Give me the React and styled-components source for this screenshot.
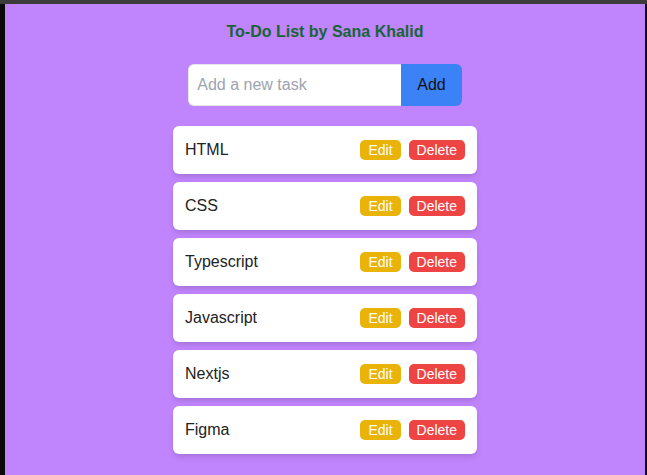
import React, { useState } from "react";
import styled, { createGlobalStyle } from "styled-components";

const GlobalStyle = createGlobalStyle`
  * { box-sizing: border-box; }
  html, body {
    margin: 0;
    padding: 0;
    height: 100%;
  }
  body {
    background: #3b3b3b;
    padding-top: 4px;
    font-family: "Liberation Sans", Arial, sans-serif;
  }
`;

const Screen = styled.div`
  min-height: calc(100vh - 4px);
  background: #c084fc;
  border-left: 5px solid #0a0a0a;
  border-right: 2px solid #0a0a0a;
  padding-top: 16px;
  display: flex;
  flex-direction: column;
  align-items: center;
`;

const Title = styled.h1`
  margin: 0 0 20px;
  font-size: 16px;
  line-height: 24px;
  font-weight: 700;
  color: #166534;
`;

const InputRow = styled.form`
  display: flex;
  margin: 0 0 20px;
`;

const TaskInput = styled.input`
  width: 213px;
  height: 42px;
  padding: 8px;
  font-family: inherit;
  font-size: 16px;
  color: #111;
  border: 1px solid #e5e7eb;
  border-right: none;
  border-radius: 6px 0 0 6px;
  outline: none;
  &::placeholder {
    color: #9ca3af;
  }
`;

const AddButton = styled.button`
  height: 42px;
  padding: 0 16px;
  background: #3b82f6;
  color: #111;
  font-family: inherit;
  font-size: 16px;
  border: none;
  border-radius: 0 6px 6px 0;
  cursor: pointer;
`;

const List = styled.ul`
  list-style: none;
  margin: 0;
  padding: 0;
  width: 304px;
  display: flex;
  flex-direction: column;
  gap: 8px;
`;

const Item = styled.li`
  display: flex;
  align-items: center;
  justify-content: space-between;
  height: 48px;
  padding: 0 12px;
  background: #fff;
  border-radius: 6px;
  box-shadow: 0 4px 6px -1px rgba(0, 0, 0, 0.1), 0 2px 4px -2px rgba(0, 0, 0, 0.1);
  font-size: 16px;
  color: #222;
`;

const Actions = styled.div`
  display: flex;
  gap: 8px;
`;

const SmallButton = styled.button`
  height: 20px;
  padding: 0 8px;
  border: none;
  border-radius: 5px;
  background: ${(p) => (p.$danger ? "#ef4444" : "#eab308")};
  color: #fff;
  font-family: inherit;
  font-size: 14px;
  line-height: 20px;
  cursor: pointer;
`;

const initial = ["HTML", "CSS", "Typescript", "Javascript", "Nextjs", "Figma"];

export default function App() {
  const [tasks, setTasks] = useState(initial);
  const [text, setText] = useState("");

  const add = (e) => {
    e.preventDefault();
    if (!text.trim()) return;
    setTasks([...tasks, text.trim()]);
    setText("");
  };

  return (
    <>
      <GlobalStyle />
      <Screen>
        <Title>To-Do List by Sana Khalid</Title>
        <InputRow onSubmit={add}>
          <TaskInput
            value={text}
            onChange={(e) => setText(e.target.value)}
            placeholder="Add a new task"
          />
          <AddButton type="submit">Add</AddButton>
        </InputRow>
        <List>
          {tasks.map((t, i) => (
            <Item key={i}>
              <span>{t}</span>
              <Actions>
                <SmallButton>Edit</SmallButton>
                <SmallButton $danger onClick={() => setTasks(tasks.filter((_, j) => j !== i))}>
                  Delete
                </SmallButton>
              </Actions>
            </Item>
          ))}
        </List>
      </Screen>
    </>
  );
}
